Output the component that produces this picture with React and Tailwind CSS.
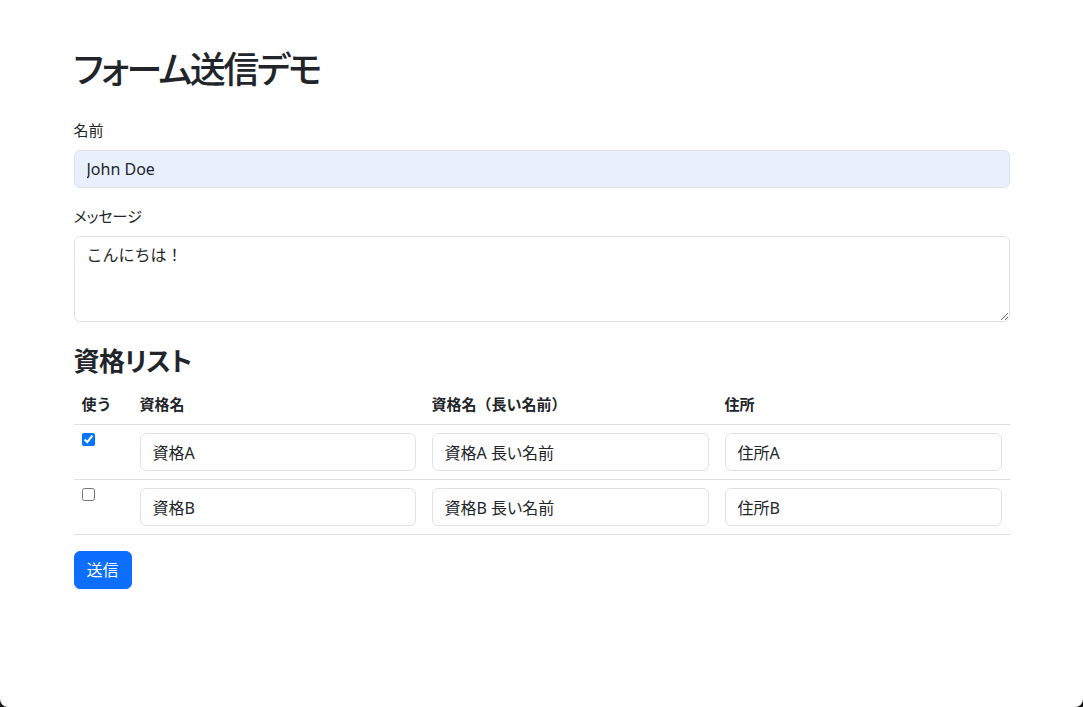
import React from "react";

const font = {
  fontFamily: '"Noto Sans", "Noto Sans CJK JP", sans-serif',
};

export default function App() {
  const rows = [
    { checked: true, name: "資格A", long: "資格A 長い名前", addr: "住所A" },
    { checked: false, name: "資格B", long: "資格B 長い名前", addr: "住所B" },
  ];
  const inputCls =
    "block w-full h-[38px] px-3 border border-[#dee2e6] rounded-[6px] text-[16px] text-[#212529] bg-white outline-none [font-feature-settings:'palt']";
  const thCls = "text-left p-2 text-[15px] leading-[24px] font-bold [font-feature-settings:normal]";
  return (
    <div className="bg-[#1b1b1b] w-[1083px] h-[707px]">
      <div
        className="bg-white w-full h-full rounded-b-[8px] text-[#212529] [font-feature-settings:'palt']"
        style={font}
      >
        <div className="w-[936px] mx-auto pt-[48px]">
          <h1 className="text-[36px] font-medium leading-[1.2] mb-[27px] tracking-[-2.5px]">
            フォーム送信デモ
          </h1>
          <div className="mb-[16px]">
            <label className="block text-[15px] leading-[24px] mb-[8px]">名前</label>
            <input
              className={inputCls + " bg-[#e8f0fe]"}
              style={{ backgroundColor: "#e8f0fe" }}
              defaultValue="John Doe"
            />
          </div>
          <div className="mb-[16px]">
            <label className="block text-[15px] leading-[24px] mb-[8px]">メッセージ</label>
            <textarea
              rows={3}
              className="block w-full h-[86px] px-3 py-[6px] border border-[#dee2e6] rounded-[6px] text-[16px] leading-[24px] text-[#212529] outline-none [font-feature-settings:normal]"
              defaultValue="こんにちは！"
            />
          </div>
          <h3 className="text-[26px] font-semibold leading-[1.2] mt-[24px] mb-[7px] tracking-[-0.5px]">
            資格リスト
          </h3>
          <table className="w-full border-collapse mb-[16px] table-fixed">
            <colgroup>
              <col className="w-[58px]" />
              <col className="w-[292px]" />
              <col className="w-[293px]" />
              <col className="w-[293px]" />
            </colgroup>
            <thead>
              <tr className="border-b border-[#dee2e6]">
                <th className={thCls}>使う</th>
                <th className={thCls}>資格名</th>
                <th className={thCls}>資格名（長い名前）</th>
                <th className={thCls}>住所</th>
              </tr>
            </thead>
            <tbody>
              {rows.map((r, i) => (
                <tr key={i} className="border-b border-[#dee2e6]">
                  <td className="p-2 align-top">
                    <input
                      type="checkbox"
                      defaultChecked={r.checked}
                      className="m-0 w-[13px] h-[13px] block"
                    />
                  </td>
                  <td className="p-2">
                    <input className={inputCls} defaultValue={r.name} />
                  </td>
                  <td className="p-2">
                    <input className={inputCls} defaultValue={r.long} />
                  </td>
                  <td className="p-2">
                    <input className={inputCls} defaultValue={r.addr} />
                  </td>
                </tr>
              ))}
            </tbody>
          </table>
          <button className="h-[38px] px-3 bg-[#0d6efd] text-white text-[16px] rounded-[6px] border border-[#0d6efd]">
            送信
          </button>
        </div>
      </div>
    </div>
  );
}
